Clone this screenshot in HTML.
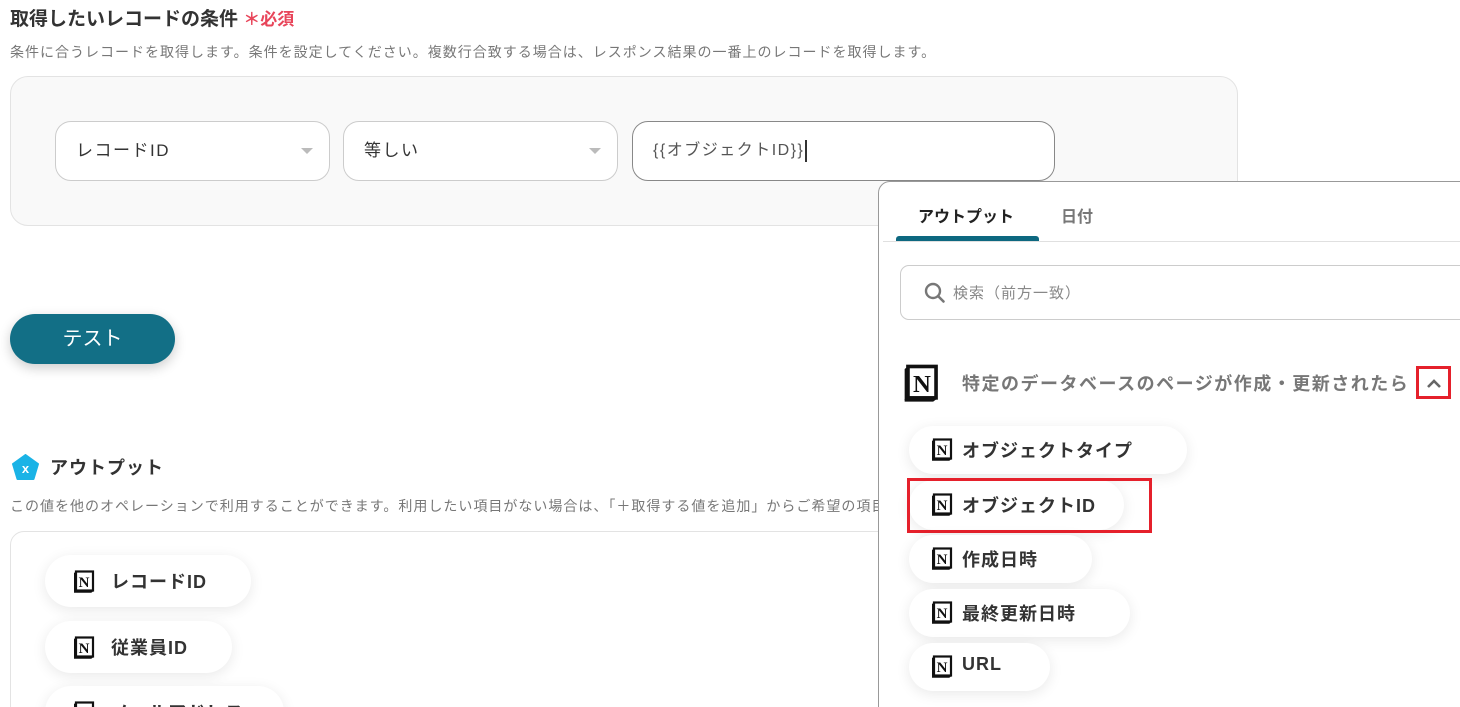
<!DOCTYPE html>
<html style="width:1460px;height:707px;overflow:hidden"><head><meta charset="utf-8"><style>
*{box-sizing:border-box;margin:0;padding:0}
body{width:1460px;height:707px;overflow:hidden;background:#fff;position:relative;font-family:"Liberation Sans","Noto Sans CJK JP",sans-serif;color:#333}
.a{position:absolute;white-space:nowrap}
.sel{position:absolute;top:121px;height:60px;background:#fff;border:1px solid #ccc;border-radius:16px;font-size:17px;letter-spacing:1.5px;line-height:58px;padding-left:20px;color:#333}
.sel .ar{position:absolute;right:16px;top:26px;width:0;height:0;border-left:6px solid transparent;border-right:6px solid transparent;border-top:6px solid #bbb}
.pill{position:absolute;background:#fff;border-radius:26px;box-shadow:0 3px 14px rgba(0,0,0,.09);font-weight:bold;font-size:18px;letter-spacing:1px;color:#333;white-space:nowrap}
.pill svg{position:absolute}
.pill span{position:absolute}
</style></head><body>
<svg width="0" height="0" style="position:absolute"><defs><g id="n"><rect x="3" y="1.5" width="17" height="19" fill="#fff" stroke="#111" stroke-width="2.2"/><path d="M1 3 L3 1.5 L3 20.5 L1 22 Z" fill="#111"/><path d="M1 22 L18 22 L20 20.5" fill="none" stroke="#111" stroke-width="1.6"/><text x="11.5" y="17" text-anchor="middle" font-family="Liberation Serif,serif" font-weight="bold" font-size="15" fill="#111">N</text></g></defs></svg>

<div class="a" style="left:10px;top:4px;font-size:19px;font-weight:bold;color:#333">取得したいレコードの条件 <span style="color:#e8455a;font-size:17px">＊必須</span></div>
<div class="a" style="left:10px;top:42px;font-size:14px;letter-spacing:1px;color:#777">条件に合うレコードを取得します。条件を設定してください。複数行合致する場合は、レスポンス結果の一番上のレコードを取得します。</div>
<div class="a" style="left:10px;top:76px;width:1228px;height:150px;background:#f9f9f9;border:1px solid #e3e3e3;border-radius:18px"></div>
<div class="sel" style="left:55px;width:275px">レコードID<div class="ar"></div></div>
<div class="sel" style="left:343px;width:275px">等しい<div class="ar"></div></div>
<div class="sel" style="left:632px;width:423px;border-color:#888;color:#555;font-size:16px">{{オブジェクトID}}<span style="display:inline-block;width:1.5px;height:22px;background:#333;vertical-align:middle;margin-left:1px"></span></div>

<div class="a" style="left:10px;top:314px;width:165px;height:50px;background:#126f86;border-radius:25px;color:#fff;font-size:20px;line-height:50px;text-align:center;box-shadow:0 4px 12px rgba(0,0,0,.2)">テスト</div>

<svg class="a" style="left:12px;top:454px" width="27" height="27" viewBox="0 0 27 27"><path d="M13.5 1 L26 10 L21.5 25 L5.5 25 L1 10 Z" fill="#1ab3e6" stroke="#1ab3e6" stroke-width="2" stroke-linejoin="round"/><text x="13.5" y="19" text-anchor="middle" font-size="13" font-weight="bold" fill="#fff" font-family="Liberation Sans,sans-serif">x</text></svg>
<div class="a" style="left:50px;top:454px;font-size:18px;letter-spacing:1px;font-weight:bold;color:#333">アウトプット</div>
<div class="a" style="left:10px;top:496px;font-size:14px;letter-spacing:1px;color:#777">この値を他のオペレーションで利用することができます。利用したい項目がない場合は、「＋取得する値を追加」からご希望の項目を追加してください。</div>
<div class="a" style="left:10px;top:531px;width:1000px;height:200px;border:1px solid #e3e3e3;border-radius:14px;background:#fff"></div>
<div class="pill" style="left:45px;top:555px;width:206px;height:52px"><svg style="left:28px;top:15px" width="23" height="24"><use href="#n"/></svg><span style="left:66px;top:13px">レコードID</span></div>
<div class="pill" style="left:45px;top:621px;width:187px;height:52px"><svg style="left:28px;top:15px" width="23" height="24"><use href="#n"/></svg><span style="left:66px;top:13px">従業員ID</span></div>
<div class="pill" style="left:45px;top:686px;width:239px;height:52px"><svg style="left:28px;top:15px" width="23" height="24"><use href="#n"/></svg><span style="left:66px;top:13px">メールアドレス</span></div>

<div class="a" style="left:878px;top:181px;width:600px;height:540px;background:#fff;border:1px solid #999;border-radius:12px 0 0 0">
  <div class="a" style="left:39px;top:21px;font-size:16px;font-weight:bold;color:#222">アウトプット</div>
  <div class="a" style="left:182px;top:21px;font-size:16px;font-weight:bold;color:#777">日付</div>
  <div class="a" style="left:17px;top:54px;width:143px;height:5px;background:#0d6880;border-radius:3px 3px 0 0"></div>
  <div class="a" style="left:4px;top:59px;width:600px;height:1px;background:#e0e0e0"></div>
  <div class="a" style="left:21px;top:83px;width:600px;height:55px;border:1px solid #ccc;border-radius:9px"></div>
  <svg class="a" style="left:45px;top:100px" width="22" height="22" viewBox="0 0 22 22"><circle cx="9" cy="9" r="7" fill="none" stroke="#777" stroke-width="2.4"/><path d="M14 14 L19.5 19.5" stroke="#777" stroke-width="2.6" stroke-linecap="round"/></svg>
  <div class="a" style="left:74px;top:100px;font-size:15px;letter-spacing:1px;color:#888">検索（前方一致）</div>
  <svg class="a" style="left:24px;top:182px" width="38" height="38" viewBox="0 0 23 23"><use href="#n"/></svg>
  <div class="a" style="left:83px;top:188px;font-size:18px;letter-spacing:1.5px;font-weight:bold;color:#777">特定のデータベースのページが作成・更新されたら</div>
  <div class="a" style="left:537px;top:184px;width:35px;height:33px;border:3px solid #e5202b"></div>
  <svg class="a" style="left:547px;top:195px" width="16" height="12" viewBox="0 0 16 12"><path d="M2 10 L8 4 L14 10" fill="none" stroke="#666" stroke-width="2.6"/></svg>
</div>
<div class="pill" style="left:909px;top:426px;width:278px;height:48px"><svg style="left:22px;top:12px" width="23" height="24"><use href="#n"/></svg><span style="left:53px;top:11px">オブジェクトタイプ</span></div>
<div class="pill" style="left:909px;top:480px;width:215px;height:50px"><svg style="left:22px;top:13px" width="23" height="24"><use href="#n"/></svg><span style="left:53px;top:12px">オブジェクトID</span></div>
<div class="a" style="left:907px;top:478px;width:245px;height:55px;border:3px solid #e5202b"></div>
<div class="pill" style="left:909px;top:535px;width:183px;height:48px"><svg style="left:22px;top:12px" width="23" height="24"><use href="#n"/></svg><span style="left:53px;top:11px">作成日時</span></div>
<div class="pill" style="left:909px;top:589px;width:221px;height:48px"><svg style="left:22px;top:12px" width="23" height="24"><use href="#n"/></svg><span style="left:53px;top:11px">最終更新日時</span></div>
<div class="pill" style="left:909px;top:643px;width:141px;height:48px"><svg style="left:22px;top:12px" width="23" height="24"><use href="#n"/></svg><span style="left:53px;top:11px">URL</span></div>
</body></html>
